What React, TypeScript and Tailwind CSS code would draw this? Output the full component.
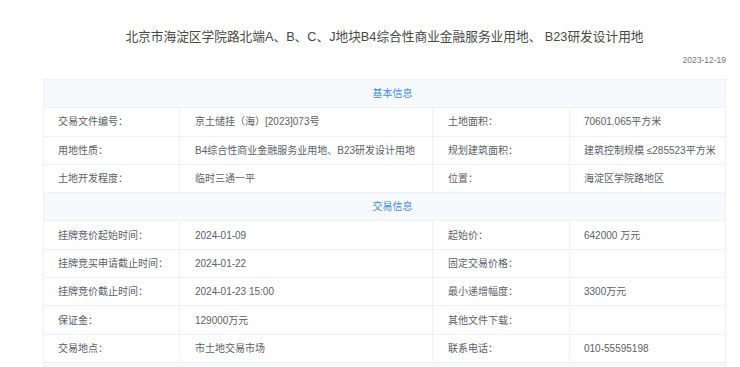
const basic = [
  ["交易文件编号：", "京土储挂（海）[2023]073号", "土地面积：", "70601.065平方米"],
  ["用地性质：", "B4综合性商业金融服务业用地、B23研发设计用地", "规划建筑面积：", "建筑控制规模 ≤285523平方米"],
  ["土地开发程度：", "临时三通一平", "位置：", "海淀区学院路地区"],
];

const trade = [
  ["挂牌竞价起始时间：", "2024-01-09", "起始价：", "642000 万元"],
  ["挂牌竞买申请截止时间：", "2024-01-22", "固定交易价格：", ""],
  ["挂牌竞价截止时间：", "2024-01-23 15:00", "最小递增幅度：", "3300万元"],
  ["保证金：", "129000万元", "其他文件下载：", ""],
  ["交易地点：", "市土地交易市场", "联系电话：", "010-55595198"],
];

const SectionHead = ({ title }: { title: string }) => (
  <div className="h-[28.3px] flex items-center justify-center pl-[16px] bg-[#f7f9fd] border-b border-[#eef0f5] text-[10px] text-[#3d8de2]">
    {title}
  </div>
);

const Row = ({ cells }: { cells: string[] }) => (
  <div className="grid grid-cols-[136px_253px_137px_1fr] h-[28.3px] border-b border-[#eef0f5] text-[10px] text-[#5c6068]">
    <div className="flex items-center pl-[14px] border-r border-[#eef0f5]">{cells[0]}</div>
    <div className="flex items-center pl-[15px] border-r border-[#eef0f5] whitespace-nowrap">{cells[1]}</div>
    <div className="flex items-center pl-[15px] border-r border-[#eef0f5]">{cells[2]}</div>
    <div className="flex items-center pl-[14px] whitespace-nowrap">{cells[3]}</div>
  </div>
);

export default function App() {
  return (
    <div
      className="w-[740px] h-[367px] overflow-hidden bg-white pl-[43px] pr-[14px]"
      style={{ fontFamily: '"Liberation Sans", "Noto Sans CJK SC", sans-serif' }}
    >
      <div className="pt-[27px] h-[48px] text-center text-[12.7px] leading-[20px] text-[#484848]">
        北京市海淀区学院路北端A、B、C、J地块B4综合性商业金融服务业用地、 B23研发设计用地
      </div>
      <div className="h-[31px] pt-[6px] text-right text-[8.5px] leading-[12px] text-[#777]">2023-12-19</div>
      <div className="border-l border-r border-t border-[#eef0f5]">
        <SectionHead title="基本信息" />
        {basic.map((r, i) => (
          <Row key={i} cells={r} />
        ))}
        <SectionHead title="交易信息" />
        {trade.map((r, i) => (
          <Row key={i} cells={r} />
        ))}
        <div className="h-[28px] bg-[#f7f9fd]" />
      </div>
    </div>
  );
}
